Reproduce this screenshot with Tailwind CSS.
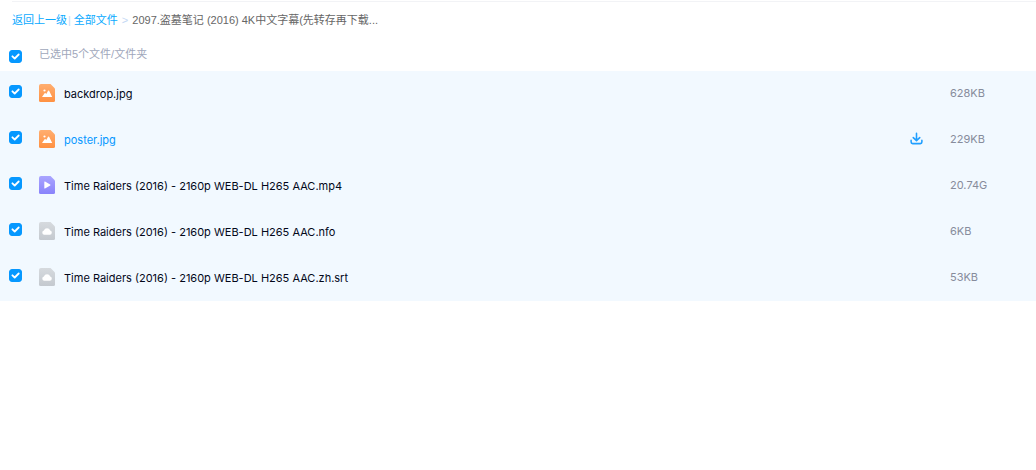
<!DOCTYPE html>
<html lang="zh-CN">
<head>
  <meta charset="UTF-8" />
  <meta name="viewport" content="width=device-width, initial-scale=1.0" />
  <title>全部文件</title>
  <script src="https://cdn.jsdelivr.net/npm/@tailwindcss/browser@4"></script>
</head>
<body class="bg-white font-['Liberation_Sans','Noto_Sans_CJK_SC',sans-serif] text-[11px] leading-4 text-[#03081a]">
  <!-- Shared icons -->
  <svg class="absolute size-0" aria-hidden="true">
    <defs>
      <linearGradient id="orange" x1="0" y1="0" x2="0" y2="1"><stop offset="0" stop-color="#ffae70" /><stop offset="1" stop-color="#ff9142" /></linearGradient>
      <linearGradient id="purple" x1="0" y1="0" x2="0" y2="1"><stop offset="0" stop-color="#aaa5ff" /><stop offset="1" stop-color="#8983fb" /></linearGradient>
      <linearGradient id="gray" x1="0" y1="0" x2="0" y2="1"><stop offset="0" stop-color="#d6dade" /><stop offset="1" stop-color="#c4c9cf" /></linearGradient>
    </defs>
    <symbol id="check" viewBox="0 0 13 13">
      <path d="M3.4 6.3 5.7 8.5 9.7 4.5" fill="none" stroke="#fff" stroke-width="1.8" stroke-linecap="round" stroke-linejoin="round" />
    </symbol>
    <symbol id="image" viewBox="0 0 16 18">
      <path d="M2 0H11.5L16 4.5V16.5Q16 18 14.5 18H1.5Q0 18 0 16.5V2Q0 0 2 0Z" fill="url(#orange)" />
      <circle cx="5.5" cy="6.5" r="1.1" fill="#fff" />
      <path d="M3 13 5.6 9.2Q6.1 8.6 6.6 9.2L7.3 10 9.1 6.8Q9.6 6.1 10.1 6.8L13.2 13Z" fill="#fff" />
    </symbol>
    <symbol id="video" viewBox="0 0 16 18">
      <path d="M2 0H11.5L16 4.5V16.5Q16 18 14.5 18H1.5Q0 18 0 16.5V2Q0 0 2 0Z" fill="url(#purple)" />
      <path d="M5.3 5.9Q5.3 5.2 6 5.6L11.2 8.6Q11.8 9 11.2 9.4L6 12.4Q5.3 12.8 5.3 12Z" fill="#fff" />
    </symbol>
    <symbol id="cloud" viewBox="0 0 16 18">
      <path d="M2 0H11.5L16 4.5V16.5Q16 18 14.5 18H1.5Q0 18 0 16.5V2Q0 0 2 0Z" fill="url(#gray)" />
      <path d="M5.2 12.8A2.2 2.2 0 0 1 4.9 8.5 3.3 3.3 0 0 1 11.2 8.5 2.2 2.2 0 0 1 10.9 12.8Z" fill="#fff" />
    </symbol>
    <symbol id="download" viewBox="0 0 14 14">
      <path d="M7 1.5V9M3.5 6 7 9.3 10.5 6M1.2 9V10.8Q1.2 12.5 2.9 12.5H11.1Q12.8 12.5 12.8 10.8V9" fill="none" stroke="currentColor" stroke-width="1.7" stroke-linecap="round" stroke-linejoin="round" />
    </symbol>
  </svg>

  <!-- Breadcrumb -->
  <nav class="pt-px" aria-label="路径">
    <div class="ml-3 border-t border-[#f2f3f6]"></div>
    <div class="flex h-9 items-center pl-3 text-[#09aaff]">
      <a href="#">返回上一级</a>
      <span class="mx-px text-[#c4d8f4]">|</span>
      <a href="#" class="ml-0.5">全部文件</a>
      <span class="mx-1 text-[#c4d8f4]">&gt;</span>
      <span class="text-[#666]">2097.盗墓笔记 (2016) 4K中文字幕(先转存再下载...</span>
    </div>
  </nav>

  <!-- File list -->
  <table class="w-full table-fixed">
    <colgroup>
      <col class="w-[39px]" />
      <col />
      <col class="w-11" />
      <col class="w-[86px]" />
    </colgroup>
    <thead>
      <tr class="h-[33px] text-left text-[#a0a7bb]">
        <th class="pt-1 pl-[9px]">
          <span class="grid w-[13px]">
            <input type="checkbox" checked aria-label="全选" class="col-start-1 row-start-1 size-[13px] appearance-none rounded-[3px] border border-[#afb3bf] checked:border-[#0698ff] checked:bg-[#0698ff]" />
            <svg class="pointer-events-none col-start-1 row-start-1 size-[13px]"><use href="#check" /></svg>
          </span>
        </th>
        <th class="pb-0.5 font-normal" colspan="3">已选中5个文件/文件夹</th>
      </tr>
    </thead>
    <tbody class="bg-[#f2f9ff]">
      <tr class="h-[46px]">
        <td class="pb-1.5 pl-[9px]">
          <span class="grid w-[13px]">
            <input type="checkbox" checked id="file1" class="col-start-1 row-start-1 size-[13px] appearance-none rounded-[3px] border border-[#afb3bf] checked:border-[#0698ff] checked:bg-[#0698ff]" />
            <svg class="pointer-events-none col-start-1 row-start-1 size-[13px]"><use href="#check" /></svg>
          </span>
        </td>
        <td>
          <label for="file1" class="flex items-center gap-[9px] font-[Inter]"><svg class="mb-0.5 h-[18px] w-4"><use href="#image" /></svg>backdrop.jpg</label>
        </td>
        <td></td>
        <td class="pb-0.5 font-[Inter] text-[#878c9c]">628KB</td>
      </tr>
      <tr class="h-[46px]">
        <td class="pb-1.5 pl-[9px]">
          <span class="grid w-[13px]">
            <input type="checkbox" checked id="file2" class="col-start-1 row-start-1 size-[13px] appearance-none rounded-[3px] border border-[#afb3bf] checked:border-[#0698ff] checked:bg-[#0698ff]" />
            <svg class="pointer-events-none col-start-1 row-start-1 size-[13px]"><use href="#check" /></svg>
          </span>
        </td>
        <td>
          <label for="file2" class="flex items-center gap-[9px] font-[Inter] text-[#0698ff]"><svg class="mb-0.5 h-[18px] w-4"><use href="#image" /></svg>poster.jpg</label>
        </td>
        <td class="pb-1 pl-1">
          <button type="button" aria-label="下载" class="block text-[#209fff]"><svg class="size-[13px]"><use href="#download" /></svg></button>
        </td>
        <td class="pb-0.5 font-[Inter] text-[#878c9c]">229KB</td>
      </tr>
      <tr class="h-[46px]">
        <td class="pb-1.5 pl-[9px]">
          <span class="grid w-[13px]">
            <input type="checkbox" checked id="file3" class="col-start-1 row-start-1 size-[13px] appearance-none rounded-[3px] border border-[#afb3bf] checked:border-[#0698ff] checked:bg-[#0698ff]" />
            <svg class="pointer-events-none col-start-1 row-start-1 size-[13px]"><use href="#check" /></svg>
          </span>
        </td>
        <td>
          <label for="file3" class="flex items-center gap-[9px] font-[Inter]"><svg class="mb-0.5 h-[18px] w-4"><use href="#video" /></svg>Time Raiders (2016) - 2160p WEB-DL H265 AAC.mp4</label>
        </td>
        <td></td>
        <td class="pb-0.5 font-[Inter] text-[#878c9c]">20.74G</td>
      </tr>
      <tr class="h-[46px]">
        <td class="pb-1.5 pl-[9px]">
          <span class="grid w-[13px]">
            <input type="checkbox" checked id="file4" class="col-start-1 row-start-1 size-[13px] appearance-none rounded-[3px] border border-[#afb3bf] checked:border-[#0698ff] checked:bg-[#0698ff]" />
            <svg class="pointer-events-none col-start-1 row-start-1 size-[13px]"><use href="#check" /></svg>
          </span>
        </td>
        <td>
          <label for="file4" class="flex items-center gap-[9px] font-[Inter]"><svg class="mb-0.5 h-[18px] w-4"><use href="#cloud" /></svg>Time Raiders (2016) - 2160p WEB-DL H265 AAC.nfo</label>
        </td>
        <td></td>
        <td class="pb-0.5 font-[Inter] text-[#878c9c]">6KB</td>
      </tr>
      <tr class="h-[46px]">
        <td class="pb-1.5 pl-[9px]">
          <span class="grid w-[13px]">
            <input type="checkbox" checked id="file5" class="col-start-1 row-start-1 size-[13px] appearance-none rounded-[3px] border border-[#afb3bf] checked:border-[#0698ff] checked:bg-[#0698ff]" />
            <svg class="pointer-events-none col-start-1 row-start-1 size-[13px]"><use href="#check" /></svg>
          </span>
        </td>
        <td>
          <label for="file5" class="flex items-center gap-[9px] font-[Inter]"><svg class="mb-0.5 h-[18px] w-4"><use href="#cloud" /></svg>Time Raiders (2016) - 2160p WEB-DL H265 AAC.zh.srt</label>
        </td>
        <td></td>
        <td class="pb-0.5 font-[Inter] text-[#878c9c]">53KB</td>
      </tr>
    </tbody>
  </table>
</body>
</html>
